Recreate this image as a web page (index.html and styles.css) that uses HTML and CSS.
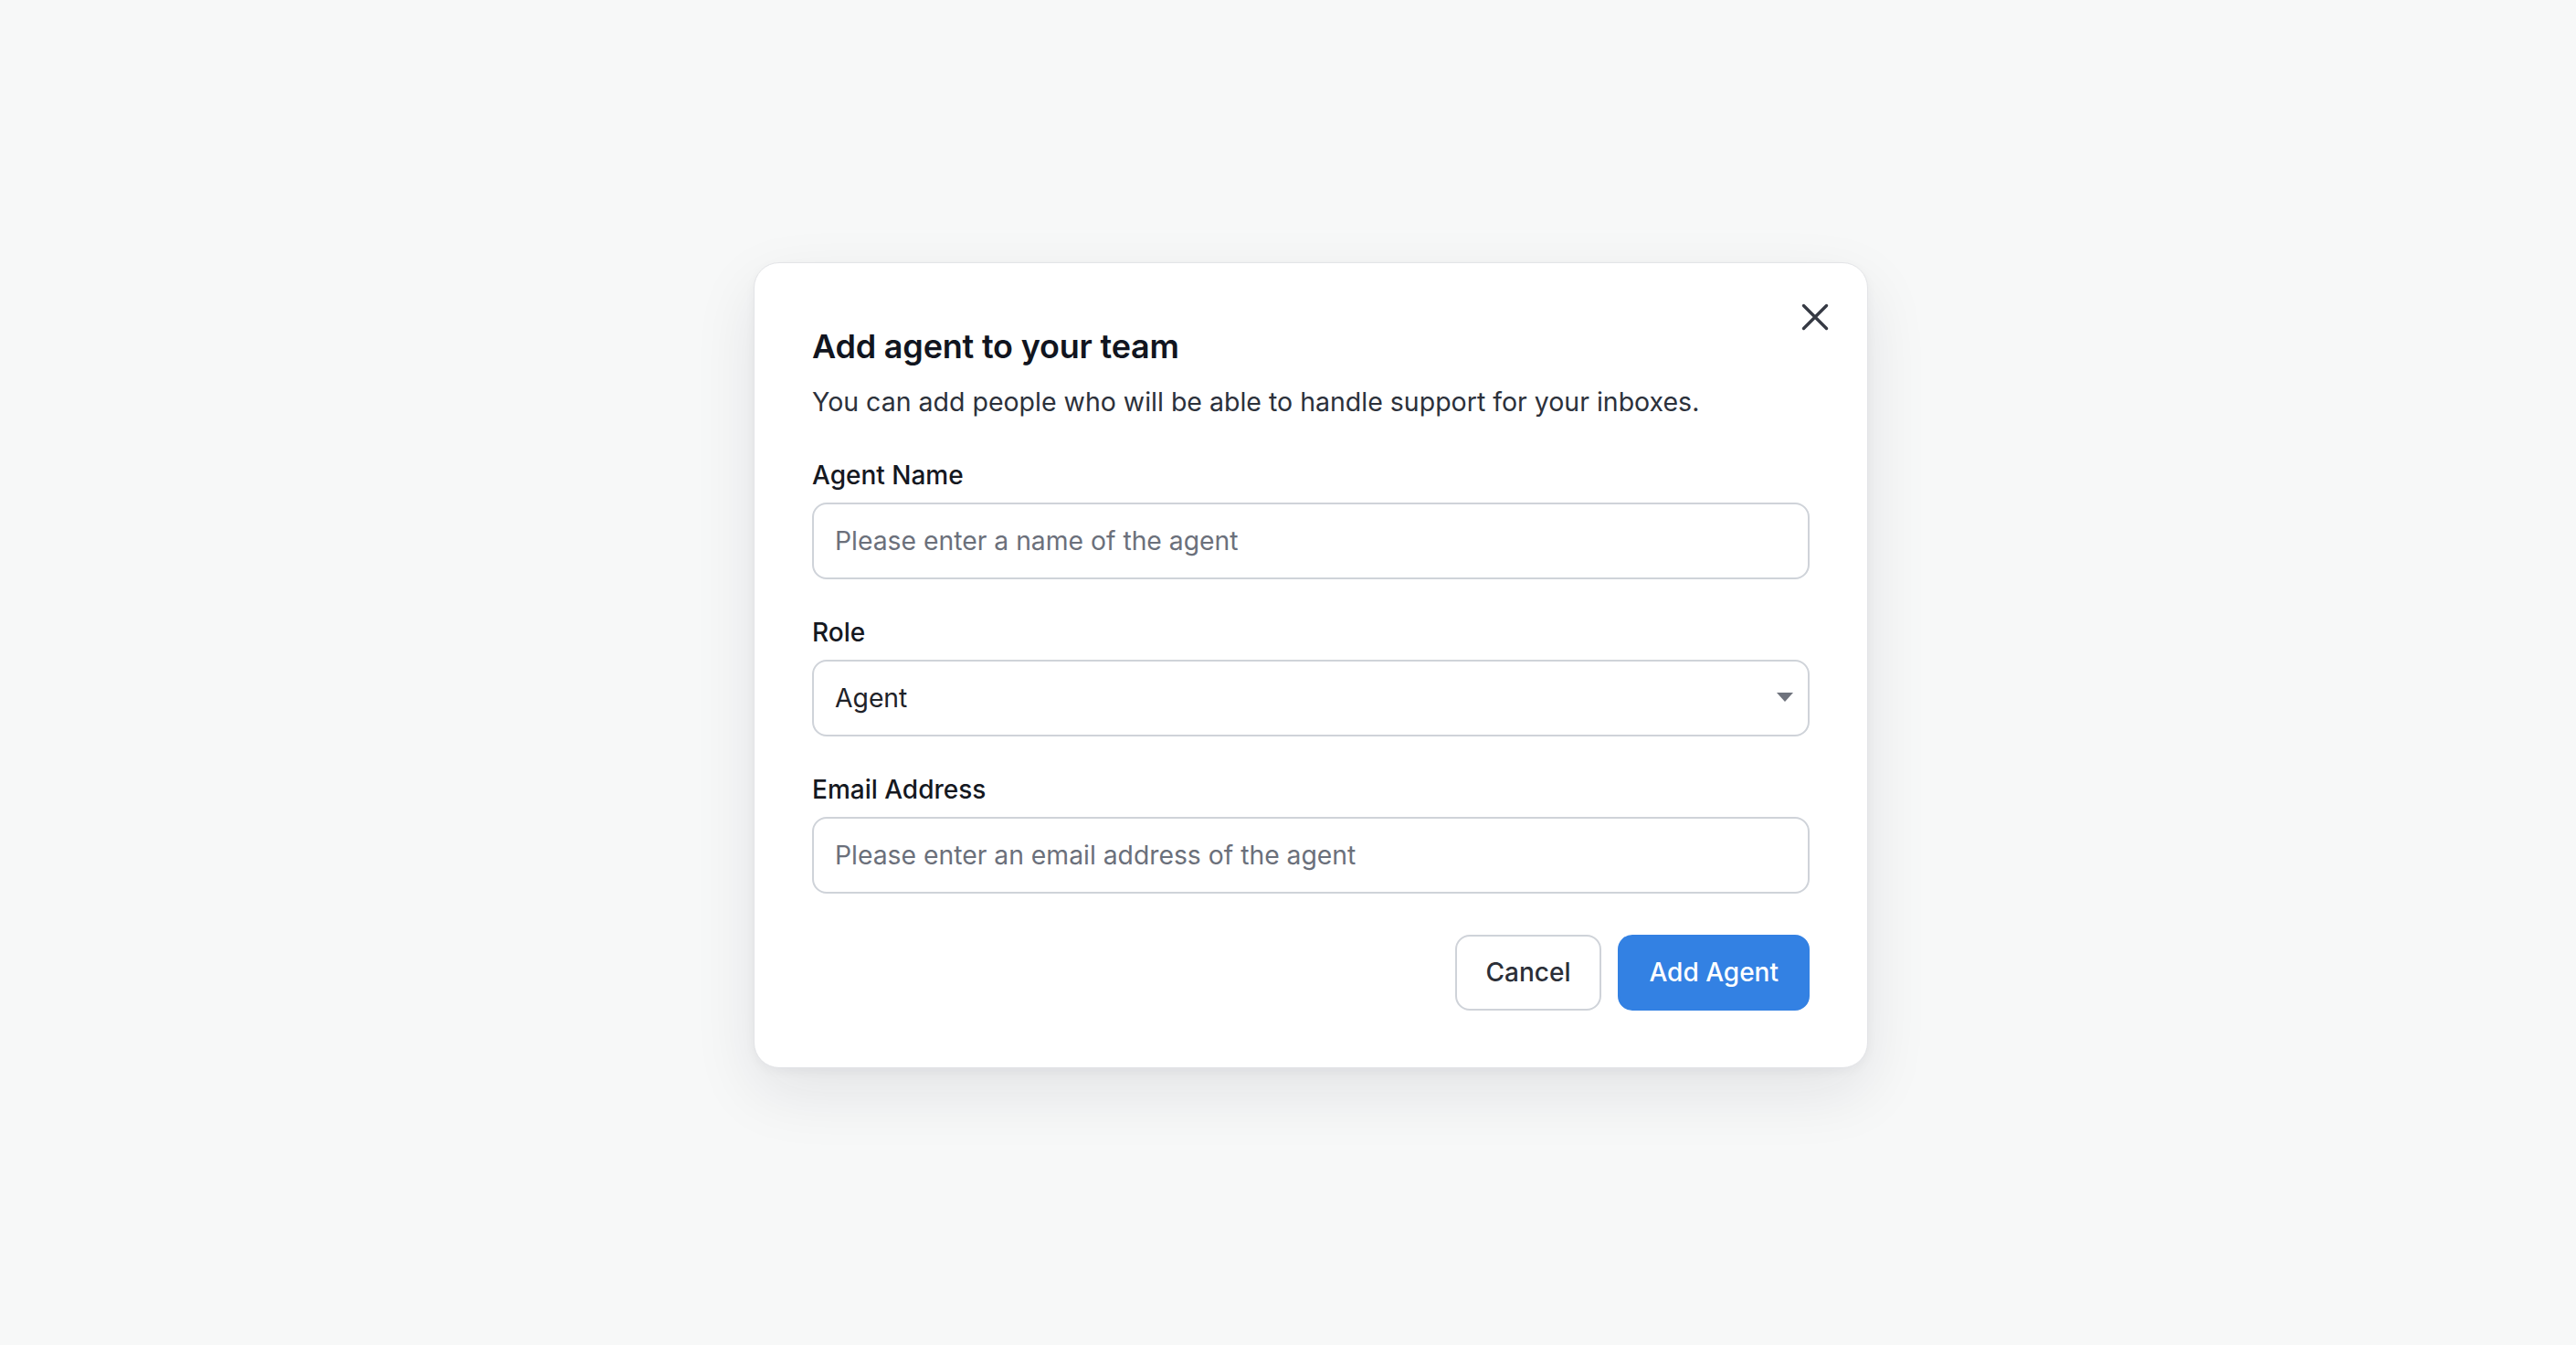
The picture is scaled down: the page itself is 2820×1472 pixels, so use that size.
FILE: index.html
```
<!DOCTYPE html>
<html>
<head>
<title>Add agent</title>
<link rel="stylesheet" href="styles.css">
</head>
<body>
<div class="stage">
  <div class="modal">
    <button class="close" aria-label="Close">
      <svg width="40" height="40" viewBox="0 0 40 40"><path d="M7.5 7.5 L32.5 32.5 M32.5 7.5 L7.5 32.5" stroke="#363a44" stroke-width="3.4" stroke-linecap="round" fill="none"/></svg>
    </button>
    <h2 class="title">Add agent to your team</h2>
    <p class="desc">You can add people who will be able to handle support for your inboxes.</p>

    <div class="field">
      <label for="agent_name">Agent Name</label>
      <input type="text" id="agent_name" placeholder="Please enter a name of the agent">
    </div>

    <div class="field">
      <label for="agent_role">Role</label>
      <div class="select-wrap">
        <select id="agent_role">
          <option>Agent</option>
          <option>Administrator</option>
        </select>
      </div>
    </div>

    <div class="field">
      <label for="agent_email">Email Address</label>
      <input type="email" id="agent_email" placeholder="Please enter an email address of the agent">
    </div>

    <div class="actions">
      <button class="btn btn-cancel">Cancel</button>
      <button class="btn btn-primary">Add Agent</button>
    </div>
  </div>
</div>
</body>
</html>
```

FILE: styles.css
```
body {
  margin: 0;
  font-family: Inter, "Noto Sans", sans-serif;
  background-color: #f7f8f8;
  color: #1f2329;
}

.stage {
  height: 100vh;
  box-sizing: border-box;
  display: flex;
  align-items: center;
  justify-content: center;
  padding-left: 50px;
  padding-bottom: 17px;
}

.modal {
  position: relative;
  width: 1220px;
  box-sizing: border-box;
  padding: 67px 63px 62px;
  background-color: #fff;
  border: 1px solid #e3e4e7;
  border-radius: 28px;
  box-shadow: 0 26px 70px rgba(20, 24, 40, 0.09), 0 4px 12px rgba(20, 24, 40, 0.04);
}

.close {
  position: absolute;
  top: 39px;
  right: 37px;
  width: 40px;
  height: 40px;
  padding: 0;
  border: none;
  background: none;
  cursor: pointer;
}

.close svg {
  display: block;
}

.title {
  margin: 0;
  font-size: 36px;
  line-height: 48px;
  font-weight: 600;
  color: #111520;
  letter-spacing: -0.2px;
}

.desc {
  margin: 17px 0 40px;
  font-size: 28.5px;
  line-height: 40px;
  color: #2c313b;
}

.field {
  margin-bottom: 38px;
}

.field label {
  display: block;
  margin-bottom: 10px;
  font-size: 28px;
  line-height: 40px;
  font-weight: 500;
  color: #15181f;
}

.field input,
.field select {
  display: block;
  width: 100%;
  height: 84px;
  box-sizing: border-box;
  padding: 0 23px;
  font-family: inherit;
  font-size: 28.3px;
  color: #1f2329;
  background-color: #fff;
  border: 2px solid #cfd3d9;
  border-radius: 16px;
  outline: none;
}

.field input::placeholder {
  color: #6b707b;
}

.select-wrap {
  position: relative;
}

.field select {
  appearance: none;
  -webkit-appearance: none;
}

.select-wrap::after {
  content: "";
  position: absolute;
  right: 18px;
  top: 36px;
  border-left: 9px solid transparent;
  border-right: 9px solid transparent;
  border-top: 10px solid #6f737d;
  pointer-events: none;
}

.actions {
  display: flex;
  justify-content: flex-end;
  gap: 18px;
  margin-top: 45px;
}

.btn {
  height: 83px;
  padding: 0 32px;
  font-family: inherit;
  font-size: 28px;
  font-weight: 500;
  border-radius: 16px;
  cursor: pointer;
}

.btn-cancel {
  background-color: #fff;
  color: #2b2f38;
  border: 2px solid #cfd3d9;
}

.btn-primary {
  background-color: #3381e3;
  color: #fff;
  border: 2px solid #3381e3;
}
```
